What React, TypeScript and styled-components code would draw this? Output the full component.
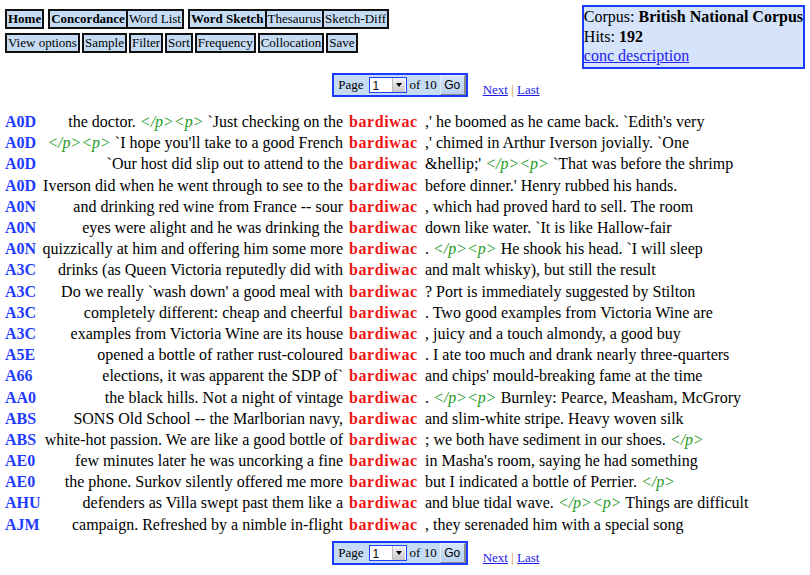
import React from "react";
import styled, { createGlobalStyle } from "styled-components";

const GlobalStyle = createGlobalStyle`
  html, body { margin: 0; padding: 0; background: #fff; }
  body {
    padding: 5px;
    font-family: "Liberation Serif", "Times New Roman", serif;
    color: #000;
  }
`;

const Header = styled.div`
  display: flex;
  justify-content: space-between;
  align-items: flex-start;
`;

const Menu = styled.div`
  display: flex;
  flex-direction: column;
  gap: 4px;
  padding-top: 4px;
`;

const MenuRow = styled.div`
  display: flex;
  gap: 4px;
`;

const Group = styled.div`
  display: flex;
`;

const MenuButton = styled.span<{ $bold?: boolean }>`
  display: block;
  border: 2px solid #111;
  background: #c6dcf4;
  font-size: 13px;
  line-height: 16px;
  padding: 0 1px;
  font-weight: ${(p) => (p.$bold ? "bold" : "normal")};
  white-space: nowrap;
  & + & { margin-left: -2px; }
`;

const CorpusBox = styled.div`
  border: 2px solid #1a3cff;
  background: #d5e3fb;
  font-size: 16px;
  line-height: 19.5px;
  padding: 0 0 1px 0;
  white-space: nowrap;
`;

const CorpusLink = styled.a`
  color: #2222ee;
  text-decoration: underline;
`;

const PagerWrap = styled.div<{ $top: number }>`
  display: grid;
  grid-template-columns: 1fr auto 1fr;
  align-items: end;
  margin: ${(p) => p.$top}px 10px 0 0;
`;

const PagerBox = styled.div`
  grid-column: 2;
  display: flex;
  align-items: center;
  border: 2px solid #1a3cff;
  background: #c6dcf4;
  height: 20px;
  padding-left: 4px;
  font-size: 13px;
`;

const PagerLabel = styled.span`
  margin-right: 5px;
`;

const SelectWrap = styled.div`
  position: relative;
  width: 38px;
  height: 16px;
  box-sizing: border-box;
  border: 1px solid #1f3fff;
  background: #fff;
`;

const NativeSelect = styled.select`
  appearance: none;
  -webkit-appearance: none;
  border: none;
  background: transparent;
  width: 100%;
  height: 100%;
  padding: 0 0 0 3px;
  margin: 0;
  font-family: "Liberation Sans", Arial, sans-serif;
  font-size: 12px;
  line-height: 14px;
  outline: none;
`;

const SelectArrow = styled.span`
  position: absolute;
  right: 1px;
  top: 0;
  width: 12px;
  height: 14px;
  background: linear-gradient(#f4f4f4, #c8c8c8);
  border-left: 1px solid #bbb;
  display: flex;
  align-items: center;
  justify-content: center;
  pointer-events: none;
  &::after {
    content: "";
    border-left: 3px solid transparent;
    border-right: 3px solid transparent;
    border-top: 4px solid #000;
  }
`;

const OfText = styled.span`
  margin: 0 3px 0 3px;
`;

const GoButton = styled.button`
  height: 20px;
  width: 26px;
  box-sizing: border-box;
  margin: 0;
  padding: 0;
  font-family: "Liberation Sans", Arial, sans-serif;
  font-size: 12px;
  background: linear-gradient(#d4e4f8, #b9d1ef);
  border: 1px solid;
  border-color: #e4eefa #8a8a8a #8a8a8a #e4eefa;
  border-right-width: 2px;
  color: #000;
`;

const PagerLinks = styled.div`
  grid-column: 3;
  font-size: 13px;
  line-height: 15px;
  margin-left: 15px;
  margin-bottom: 0;
  white-space: nowrap;
`;

const PageLink = styled.a`
  color: #1a1ae6;
  text-decoration: underline;
`;

const Sep = styled.span`
  color: #c88a2a;
`;

const Rows = styled.div`
  margin-top: 15px;
  display: flex;
  flex-direction: column;
`;

const Row = styled.div`
  display: grid;
  grid-template-columns: 36px 304px 80px 1fr;
  height: 21.2px;
  align-items: center;
  font-size: 16px;
  white-space: nowrap;
`;

const DocId = styled.span`
  font-weight: bold;
  color: #1f3bff;
`;

const LeftCtx = styled.div`
  display: flex;
  justify-content: flex-end;
  padding-right: 2px;
  min-width: 0;
`;

const Keyword = styled.span`
  padding-left: 4px;
  font-weight: bold;
  color: #f01414;
  letter-spacing: 0.6px;
`;

const RightCtx = styled.div`
  display: flex;
`;

const Tag = styled.i`
  color: #1c9a1c;
`;

const rows: [string, string, string][] = [
  ["A0D", "the doctor. </p><p> `Just checking on the", ",' he boomed as he came back. `Edith's very"],
  ["A0D", "</p><p> `I hope you'll take to a good French", ",' chimed in Arthur Iverson jovially. `One"],
  ["A0D", "`Our host did slip out to attend to the", "&hellip;' </p><p> `That was before the shrimp"],
  ["A0D", "Iverson did when he went through to see to the", "before dinner.' Henry rubbed his hands."],
  ["A0N", "and drinking red wine from France -- sour", ", which had proved hard to sell. The room"],
  ["A0N", "eyes were alight and he was drinking the", "down like water. `It is like Hallow-fair"],
  ["A0N", "quizzically at him and offering him some more", ". </p><p> He shook his head. `I will sleep"],
  ["A3C", "drinks (as Queen Victoria reputedly did with", "and malt whisky), but still the result"],
  ["A3C", "Do we really `wash down' a good meal with", "? Port is immediately suggested by Stilton"],
  ["A3C", "completely different: cheap and cheerful", ". Two good examples from Victoria Wine are"],
  ["A3C", "examples from Victoria Wine are its house", ", juicy and a touch almondy, a good buy"],
  ["A5E", "opened a bottle of rather rust-coloured", ". I ate too much and drank nearly three-quarters"],
  ["A66", "elections, it was apparent the SDP of`", "and chips' mould-breaking fame at the time"],
  ["AA0", "the black hills. Not a night of vintage", ". </p><p> Burnley: Pearce, Measham, McGrory"],
  ["ABS", "SONS Old School -- the Marlborian navy,", "and slim-white stripe. Heavy woven silk"],
  ["ABS", "white-hot passion. We are like a good bottle of", "; we both have sediment in our shoes. </p>"],
  ["AE0", "few minutes later he was uncorking a fine", "in Masha's room, saying he had something"],
  ["AE0", "the phone. Surkov silently offered me more", "but I indicated a bottle of Perrier. </p>"],
  ["AHU", "defenders as Villa swept past them like a", "and blue tidal wave. </p><p> Things are difficult"],
  ["AJM", "campaign. Refreshed by a nimble in-flight", ", they serenaded him with a special song"],
];

const renderCtx = (s: string) =>
  s.split(/(<\/p><p>|<\/p>)/).map((part, i) =>
    part === "</p><p>" || part === "</p>" ? (
      <Tag key={i}>{part}</Tag>
    ) : part ? (
      <React.Fragment key={i}>{part}</React.Fragment>
    ) : null
  );

const Pager: React.FC<{ top: number }> = ({ top }) => (
  <PagerWrap $top={top}>
    <PagerBox>
      <PagerLabel>Page</PagerLabel>
      <SelectWrap>
        <NativeSelect defaultValue="1">
          {Array.from({ length: 10 }, (_, i) => (
            <option key={i} value={String(i + 1)}>
              {i + 1}
            </option>
          ))}
        </NativeSelect>
        <SelectArrow />
      </SelectWrap>
      <OfText>of 10</OfText>
      <GoButton>Go</GoButton>
    </PagerBox>
    <PagerLinks>
      <PageLink href="#">Next</PageLink> <Sep>|</Sep> <PageLink href="#">Last</PageLink>
    </PagerLinks>
  </PagerWrap>
);

export default function App() {
  return (
    <>
      <GlobalStyle />
      <Header>
        <Menu>
          <MenuRow>
            <Group>
              <MenuButton $bold>Home</MenuButton>
            </Group>
            <Group>
              <MenuButton $bold>Concordance</MenuButton>
              <MenuButton>Word List</MenuButton>
            </Group>
            <Group>
              <MenuButton $bold>Word Sketch</MenuButton>
              <MenuButton>Thesaurus</MenuButton>
              <MenuButton>Sketch-Diff</MenuButton>
            </Group>
          </MenuRow>
          <MenuRow>
            <MenuButton>View options</MenuButton>
            <MenuButton>Sample</MenuButton>
            <MenuButton>Filter</MenuButton>
            <MenuButton>Sort</MenuButton>
            <MenuButton>Frequency</MenuButton>
            <MenuButton>Collocation</MenuButton>
            <MenuButton>Save</MenuButton>
          </MenuRow>
        </Menu>
        <CorpusBox>
          <div>
            Corpus: <b>British National Corpus</b>
          </div>
          <div>
            Hits: <b>192</b>
          </div>
          <div>
            <CorpusLink href="#">conc description</CorpusLink>
          </div>
        </CorpusBox>
      </Header>
      <Pager top={4} />
      <Rows>
        {rows.map(([id, left, right], i) => (
          <Row key={i}>
            <DocId>{id}</DocId>
            <LeftCtx>
              <span>{renderCtx(left)}</span>
            </LeftCtx>
            <Keyword>bardiwac</Keyword>
            <RightCtx>
              <span>{renderCtx(right)}</span>
            </RightCtx>
          </Row>
        ))}
      </Rows>
      <Pager top={6} />
    </>
  );
}
